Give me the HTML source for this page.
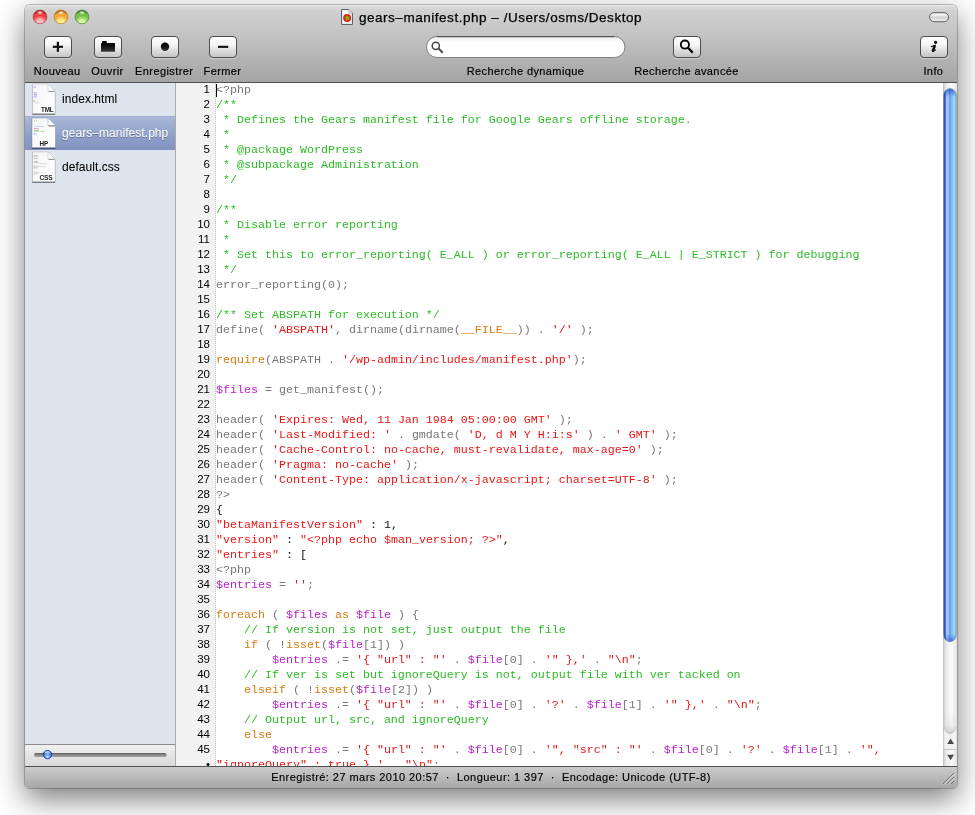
<!DOCTYPE html>
<html><head><meta charset="utf-8">
<style>
*{box-sizing:border-box;margin:0;padding:0}
html,body{width:975px;height:815px;overflow:hidden;background:#fff;font-family:"Liberation Sans",sans-serif}
#root{position:absolute;left:0;top:0;width:975px;height:815px;will-change:transform}
.a{position:absolute}
#win{left:25px;top:5px;width:932px;height:783px;border-radius:5px 5px 4px 4px;box-shadow:0 11px 30px rgba(0,0,0,0.52),0 0 0 1px rgba(0,0,0,0.22)}
#top{left:25px;top:5px;width:932px;height:78px;border-radius:5px 5px 0 0;background:linear-gradient(#ececec 0px,#dcdcdc 1.5px,#d0d0d0 6px,#c3c3c3 30px,#a4a4a4 77px);border-bottom:1px solid #515151}
.tl{top:10px;width:14px;height:14px;border-radius:50%}
.tl::after{content:"";position:absolute;left:4px;top:1px;width:6px;height:4px;border-radius:50%;background:radial-gradient(rgba(255,255,255,0.95),rgba(255,255,255,0) 70%)}
#title{left:0;top:10px;width:975px;padding-left:26px;text-align:center;font-size:13.5px;letter-spacing:0.53px;color:#000;-webkit-text-stroke:0.25px #000;white-space:nowrap}
.btn{top:36px;width:28px;height:22px;border:1px solid #4d4d4d;border-radius:4px;background:linear-gradient(#ffffff 0%,#f4f4f4 40%,#c4c4c4 100%);box-shadow:0 1px 0 rgba(255,255,255,0.35)}
.lbl{top:65px;width:140px;text-align:center;font-size:11px;letter-spacing:0.4px;color:#000;white-space:nowrap;-webkit-text-stroke:0.2px #000}
#side{left:25px;top:83px;width:151px;height:683px;background:#dee4ed;border-right:1px solid #ababab}
.sn{left:62px;font-size:12px;letter-spacing:0.05px;color:#000;white-space:nowrap;line-height:14px;-webkit-text-stroke:0.05px #000}
.sel{color:#fafafa;text-shadow:0 1px 0.5px rgba(0,0,0,0.3);-webkit-text-stroke:0.1px #fafafa}
#gut{left:176px;top:83px;width:40px;height:683px;background:#f2f2f2;border-right:1px dotted #c2c2c2}
#ed{left:216px;top:83px;width:727px;height:683px;background:#fff;overflow:hidden}
#status{left:25px;top:766px;width:932px;height:22px;border-radius:0 0 4px 4px;background:linear-gradient(#cbcbcb,#a7a7a7);border-top:1px solid #515151;font-size:11px;letter-spacing:0.45px;color:#000;text-align:center;line-height:21px;white-space:nowrap;-webkit-text-stroke:0.15px #000}
pre{font-family:"Liberation Mono",monospace;font-size:11.667px;line-height:15px}
#code{left:0;top:0;color:#777}
#nums{right:5px;top:-1px;text-align:right;color:#000;font-family:"Liberation Sans",sans-serif;font-size:11.5px}
.c{color:#2dbb26}.s{color:#e81616}.k{color:#d87a10}.v{color:#b722c9}.b{color:#111}
</style></head><body>
<div id="root">
<div id="win" class="a"></div>
<div id="top" class="a"></div>
<svg class="a" style="left:0;top:0" width="100" height="30" viewBox="0 0 100 30"><defs><radialGradient id="tlr" cx="0.5" cy="0.95" r="0.85"><stop offset="0" stop-color="#f9c2c2"/><stop offset="0.25" stop-color="#f9c2c2"/><stop offset="0.65" stop-color="#ee3e3e"/><stop offset="0.85" stop-color="#ee3e3e"/><stop offset="1" stop-color="#a82222"/></radialGradient><radialGradient id="tlo" cx="0.5" cy="0.95" r="0.85"><stop offset="0" stop-color="#fdf08a"/><stop offset="0.25" stop-color="#fdf08a"/><stop offset="0.65" stop-color="#f2a632"/><stop offset="0.85" stop-color="#f2a632"/><stop offset="1" stop-color="#b06414"/></radialGradient><radialGradient id="tlg" cx="0.5" cy="0.95" r="0.85"><stop offset="0" stop-color="#d8f4a8"/><stop offset="0.25" stop-color="#d8f4a8"/><stop offset="0.65" stop-color="#74bf44"/><stop offset="0.85" stop-color="#74bf44"/><stop offset="1" stop-color="#3c7a22"/></radialGradient><radialGradient id="hl" cx="0.5" cy="0.5" r="0.5"><stop offset="0" stop-color="#fff" stop-opacity="0.95"/><stop offset="1" stop-color="#fff" stop-opacity="0"/></radialGradient></defs><circle cx="40" cy="16.9" r="6.9" fill="url(#tlr)" stroke="#a82222" stroke-opacity="0.75" stroke-width="0.8"/><ellipse cx="40" cy="12.6" rx="3.2" ry="2.2" fill="url(#hl)"/><circle cx="61" cy="16.9" r="6.9" fill="url(#tlo)" stroke="#b06414" stroke-opacity="0.75" stroke-width="0.8"/><ellipse cx="61" cy="12.6" rx="3.2" ry="2.2" fill="url(#hl)"/><circle cx="82" cy="16.9" r="6.9" fill="url(#tlg)" stroke="#3c7a22" stroke-opacity="0.75" stroke-width="0.8"/><ellipse cx="82" cy="12.6" rx="3.2" ry="2.2" fill="url(#hl)"/></svg>
<div id="title" class="a">gears&#8211;manifest.php &#8211; /Users/osms/Desktop</div>
<div class="a btn" style="left:44px"></div>
<div class="a btn" style="left:94px"></div>
<div class="a btn" style="left:151px"></div>
<div class="a btn" style="left:209px"></div>
<div class="a btn" style="left:673px"></div>
<div class="a btn" style="left:920px"></div>
<div class="a lbl" style="left:-12.8px">Nouveau</div>
<div class="a lbl" style="left:37.5px">Ouvrir</div>
<div class="a lbl" style="left:94.2px">Enregistrer</div>
<div class="a lbl" style="left:152.5px">Fermer</div>
<div class="a lbl" style="left:455.5px">Recherche dynamique</div>
<div class="a lbl" style="left:616.5px">Recherche avancée</div>
<div class="a lbl" style="left:863.4px">Info</div>
<svg class="a" style="left:0;top:0" width="975" height="82" viewBox="0 0 975 82">
<defs><linearGradient id="fg" x1="0" y1="0" x2="0" y2="1"><stop offset="0" stop-color="#000"/><stop offset="0.5" stop-color="#111"/><stop offset="1" stop-color="#3a3a3a"/></linearGradient>
<linearGradient id="sf" x1="0" y1="0" x2="0" y2="1"><stop offset="0" stop-color="#e8e8e8"/><stop offset="0.25" stop-color="#fff"/><stop offset="1" stop-color="#fff"/></linearGradient></defs>
<rect x="52.8" y="45.7" width="10.2" height="2.2" fill="#111"/>
<rect x="56.8" y="41.8" width="2.2" height="10" fill="#111"/>
<path d="M102,43 L102,41.8 Q102,41.1 102.8,41.1 L106,41.1 Q106.8,41.1 106.8,42 L106.8,43 L114.3,43 Q115,43 115,43.8 L115,51.8 L101,51.8 L101,43.8 Q101,43 102,43 Z" fill="url(#fg)"/>
<circle cx="165" cy="46.8" r="4.2" fill="url(#fg)"/>
<rect x="218" y="45.8" width="10.2" height="2.1" fill="#111"/>
<rect x="426.5" y="36.5" width="198.5" height="21" rx="10.5" fill="url(#sf)" stroke="#808080" stroke-width="1"/><path d="M437,36.6 H614.5" stroke="#555" stroke-width="1.1"/>
<circle cx="435.8" cy="45.8" r="3.6" fill="none" stroke="#444" stroke-width="1.5"/>
<path d="M438.4,48.4 L442.8,52.8" stroke="#444" stroke-width="2"/>
<circle cx="684.9" cy="44.6" r="4.1" fill="none" stroke="#000" stroke-width="1.8"/>
<path d="M687.8,47.6 L692.8,52.8" stroke="#000" stroke-width="2.2"/>
<circle cx="935.6" cy="42.3" r="1.6" fill="#111"/>
<path d="M934.9,45.4 L932.7,51.4" stroke="#111" stroke-width="2.6"/>
<path d="M930.9,46.8 L935.8,45.1" stroke="#111" stroke-width="1.1"/>
<path d="M932,51.8 Q934,51.6 935.8,49.7" fill="none" stroke="#111" stroke-width="1.1"/>
</svg>

<div id="side" class="a"></div>
<div class="a" style="left:25px;top:116px;width:150px;height:34px;background:linear-gradient(#aab9d8,#8d9fc9 60%,#8194c0);border-top:1px solid #a0b0d2"></div>
<div class="a sn" style="top:92px">index.html</div>
<div class="a sn sel" style="top:126px">gears&#8211;manifest.php</div>
<div class="a sn" style="top:160px">default.css</div>
<svg class="a" style="left:0;top:0" width="176" height="190" viewBox="0 0 176 190">
<defs>
<linearGradient id="pg" x1="0" y1="0" x2="1" y2="1"><stop offset="0" stop-color="#f4f4f4"/><stop offset="1" stop-color="#fff"/></linearGradient>
<filter id="sh" x="-20%" y="-20%" width="140%" height="140%"><feGaussianBlur in="SourceAlpha" stdDeviation="0.6"/><feOffset dy="0.6"/><feComponentTransfer><feFuncA type="linear" slope="0.6"/></feComponentTransfer><feMerge><feMergeNode/><feMergeNode in="SourceGraphic"/></feMerge></filter>
</defs>
<g transform="translate(32.5,84)">
<path d="M0,0 H15.5 L22.5,7 V29.5 H0 Z" fill="url(#pg)" filter="url(#sh)" stroke="#b4b4b4" stroke-width="0.5"/>
<path d="M15.5,0 V7 H22.5 Z" fill="#fff" stroke="#bbb" stroke-width="0.5"/>
<path d="M15.5,7 H22.5 L21.5,8 H16.5 Z" fill="#999"/>
<rect x="1" y="2.6" width="2" height="0.8" fill="#7a7ae8"/><rect x="1" y="8.5" width="3" height="0.8" fill="#8080ee"/><rect x="1.5" y="10.5" width="3" height="0.8" fill="#6a6aee"/><rect x="1" y="12.5" width="3" height="0.8" fill="#8a8aee"/>
<rect x="1" y="16.6" width="1" height="1" fill="#777"/><rect x="2.5" y="18.6" width="4" height="0.6" fill="#bbb"/>
<text x="8.6" y="27.6" font-family="Liberation Sans" font-weight="bold" font-size="6.4" fill="#222" letter-spacing="-0.3">TML</text>
</g>
<g transform="translate(32,118)">
<path d="M0,0 H16 L23.5,7.5 V29.5 H0 Z" fill="url(#pg)" filter="url(#sh)" stroke="#8a96b4" stroke-width="0.5"/>
<path d="M16,0 V7.5 H23.5 Z" fill="#fff" stroke="#8a9ac0" stroke-width="0.5"/>
<path d="M16,7.5 H23.5 L22.5,8.5 H17 Z" fill="#777"/>
<rect x="2" y="2.5" width="1" height="1" fill="#9c9"/><rect x="4" y="2.5" width="1" height="1" fill="#9c9"/>
<rect x="2" y="8" width="10" height="0.8" fill="#c8c8f0"/><rect x="2" y="10.2" width="2" height="1" fill="#e88"/><rect x="4.5" y="10.2" width="2" height="1" fill="#e88"/>
<rect x="2" y="12" width="5" height="1.6" fill="#9d9"/><rect x="8.5" y="13" width="4" height="0.8" fill="#9d9"/><rect x="2" y="15" width="1.5" height="1" fill="#aaf"/><rect x="2" y="16.5" width="3" height="0.6" fill="#bbb"/>
<text x="7.5" y="27.5" font-family="Liberation Sans" font-weight="bold" font-size="6.4" fill="#222" letter-spacing="-0.2">HP</text>
</g>
<g transform="translate(32.5,152)">
<path d="M0,0 H15.5 L22.5,7 V29.5 H0 Z" fill="url(#pg)" filter="url(#sh)" stroke="#b4b4b4" stroke-width="0.5"/>
<path d="M15.5,0 V7 H22.5 Z" fill="#fff" stroke="#bbb" stroke-width="0.5"/>
<path d="M15.5,7 H22.5 L21.5,8 H16.5 Z" fill="#999"/>
<rect x="1.5" y="3.5" width="3" height="3" fill="none" stroke="#aaa" stroke-width="0.6"/><rect x="1.5" y="9.5" width="4" height="1.2" fill="#aaa"/><rect x="6" y="11.5" width="8" height="0.6" fill="#ccc"/>
<rect x="1.5" y="14" width="3" height="2" fill="none" stroke="#aaa" stroke-width="0.6"/><rect x="5" y="14.5" width="9" height="0.6" fill="#ccc"/>
<rect x="1.5" y="20" width="3" height="2" fill="none" stroke="#bbb" stroke-width="0.6"/><rect x="5" y="20.5" width="7" height="0.6" fill="#ccc"/>
<text x="7" y="27.6" font-family="Liberation Sans" font-weight="bold" font-size="6.6" fill="#222" letter-spacing="-0.2">CSS</text>
</g>
</svg>
<div id="gut" class="a"><pre id="nums" class="a">1
2
3
4
5
6
7
8
9
10
11
12
13
14
15
16
17
18
19
20
21
22
23
24
25
26
27
28
29
30
31
32
33
34
35
36
37
38
39
40
41
42
43
44
45
•</pre></div>
<div id="ed" class="a"><pre id="code" class="a">&lt;?php
<span class="c">/**</span>
<span class="c"> * Defines the Gears manifest file for Google Gears offline storage.</span>
<span class="c"> *</span>
<span class="c"> * @package WordPress</span>
<span class="c"> * @subpackage Administration</span>
<span class="c"> */</span>

<span class="c">/**</span>
<span class="c"> * Disable error reporting</span>
<span class="c"> *</span>
<span class="c"> * Set this to error_reporting( E_ALL ) or error_reporting( E_ALL | E_STRICT ) for debugging</span>
<span class="c"> */</span>
error_reporting(0);

<span class="c">/** Set ABSPATH for execution */</span>
define( <span class="s">'ABSPATH'</span>, dirname(dirname(<span class="k">__FILE__</span>)) . <span class="s">'/'</span> );

<span class="k">require</span>(ABSPATH . <span class="s">'/wp-admin/includes/manifest.php'</span>);

<span class="v">$files</span> = get_manifest();

header( <span class="s">'Expires: Wed, 11 Jan 1984 05:00:00 GMT'</span> );
header( <span class="s">'Last-Modified: '</span> . gmdate( <span class="s">'D, d M Y H:i:s'</span> ) . <span class="s">' GMT'</span> );
header( <span class="s">'Cache-Control: no-cache, must-revalidate, max-age=0'</span> );
header( <span class="s">'Pragma: no-cache'</span> );
header( <span class="s">'Content-Type: application/x-javascript; charset=UTF-8'</span> );
?&gt;
<span class="b">{</span>
<span class="s">"betaManifestVersion"</span><span class="b"> : 1,</span>
<span class="s">"version"</span><span class="b"> : </span><span class="s">"&lt;?php echo $man_version; ?&gt;"</span><span class="b">,</span>
<span class="s">"entries"</span><span class="b"> : [</span>
&lt;?php
<span class="v">$entries</span> = <span class="s">''</span>;

<span class="k">foreach</span> ( <span class="v">$files</span><span class="k"> as </span><span class="v">$file</span> ) {
<span class="c">    // If version is not set, just output the file</span>
<span class="k">    if</span> ( !<span class="k">isset</span>(<span class="v">$file</span>[1]) )
<span class="v">        $entries</span> .= <span class="s">'{ "url" : "'</span> . <span class="v">$file</span>[0] . <span class="s">'" },'</span> . <span class="s">"\n"</span>;
<span class="c">    // If ver is set but ignoreQuery is not, output file with ver tacked on</span>
<span class="k">    elseif</span> ( !<span class="k">isset</span>(<span class="v">$file</span>[2]) )
<span class="v">        $entries</span> .= <span class="s">'{ "url" : "'</span> . <span class="v">$file</span>[0] . <span class="s">'?'</span> . <span class="v">$file</span>[1] . <span class="s">'" },'</span> . <span class="s">"\n"</span>;
<span class="c">    // Output url, src, and ignoreQuery</span>
<span class="k">    else</span>
<span class="v">        $entries</span> .= <span class="s">'{ "url" : "'</span> . <span class="v">$file</span>[0] . <span class="s">'", "src" : "'</span> . <span class="v">$file</span>[0] . <span class="s">'?'</span> . <span class="v">$file</span>[1] . <span class="s">'",</span>
<span class="s">"ignoreQuery" : true },'</span> . <span class="s">"\n"</span>;</pre></div>
<div id="status" class="a">Enregistré: 27 mars 2010 20:57 &nbsp;·&nbsp; Longueur: 1 397 &nbsp;·&nbsp; Encodage: Unicode (UTF-8)</div>
<div class="a" style="left:25px;top:744px;width:150px;height:22px;border-top:1px solid #8e8e8e;background:linear-gradient(#f0f0f0,#d9d9d9)"></div>
<div class="a" style="left:216px;top:84px;width:1px;height:13px;background:#000"></div>
<svg class="a" style="left:0;top:0" width="975" height="815" viewBox="0 0 975 815">
<defs>
<linearGradient id="trk" x1="0" y1="0" x2="1" y2="0"><stop offset="0" stop-color="#c8c8c8"/><stop offset="0.25" stop-color="#ececec"/><stop offset="0.6" stop-color="#fafafa"/><stop offset="1" stop-color="#e4e4e4"/></linearGradient>
<linearGradient id="thb" x1="0" y1="0" x2="1" y2="0"><stop offset="0" stop-color="#1a3cc0"/><stop offset="0.14" stop-color="#4a78dc"/><stop offset="0.2" stop-color="#a6c3ee"/><stop offset="0.4" stop-color="#a2c0ef"/><stop offset="0.46" stop-color="#6aa0e8"/><stop offset="0.72" stop-color="#8cc6f8"/><stop offset="0.88" stop-color="#a6defe"/><stop offset="1" stop-color="#7aaee6"/></linearGradient>
<linearGradient id="thc" x1="0" y1="0" x2="0" y2="1"><stop offset="0" stop-color="#1a52cc" stop-opacity="1"/><stop offset="1" stop-color="#1a52cc" stop-opacity="0"/></linearGradient>
<linearGradient id="thd" x1="0" y1="1" x2="0" y2="0"><stop offset="0" stop-color="#1a52cc" stop-opacity="1"/><stop offset="1" stop-color="#1a52cc" stop-opacity="0"/></linearGradient>
<linearGradient id="sld" x1="0" y1="0" x2="0" y2="1"><stop offset="0" stop-color="#5a5a5a"/><stop offset="0.5" stop-color="#8a8a8a"/><stop offset="1" stop-color="#a0a0a0"/></linearGradient>
<radialGradient id="knb" cx="0.5" cy="0.75" r="0.6"><stop offset="0" stop-color="#c8ecff"/><stop offset="0.5" stop-color="#5d9ae8"/><stop offset="1" stop-color="#3a6fd8"/></radialGradient>
<linearGradient id="cap" x1="0" y1="0" x2="0" y2="1"><stop offset="0" stop-color="#d0d0d0" stop-opacity="0"/><stop offset="0.6" stop-color="#d0d0d0" stop-opacity="0.25"/><stop offset="1" stop-color="#c4c4c4" stop-opacity="0.8"/></linearGradient><filter id="bl" x="-20%" y="-50%" width="140%" height="200%"><feGaussianBlur stdDeviation="0.5"/></filter>
<linearGradient id="zm" x1="0" y1="0" x2="0" y2="1"><stop offset="0" stop-color="#e4e4e4"/><stop offset="0.2" stop-color="#f6f6f6"/><stop offset="0.55" stop-color="#cfcfcf"/><stop offset="1" stop-color="#fbfbfb"/></linearGradient>
</defs>
<rect x="943" y="83" width="14" height="683" fill="url(#trk)"/>
<line x1="943.5" y1="83" x2="943.5" y2="766" stroke="#c4c4c4" stroke-width="1"/>
<path d="M943.8,95 A6.2,6.4 0 0 1 956.2,95 L956.2,635.3 A6.2,6.4 0 0 1 943.8,635.3 Z" fill="url(#thb)" stroke="#5a5550" stroke-opacity="0.7" stroke-width="0.7"/>
<path d="M944.2,95 A5.8,6 0 0 1 955.8,95 L955.8,97 L944.2,97 Z" fill="url(#thc)" opacity="0.75"/>
<path d="M944.2,635.3 A5.8,6 0 0 0 955.8,635.3 L955.8,633.5 L944.2,633.5 Z" fill="url(#thd)" opacity="0.6"/>
<path d="M944,727 A6,6.5 0 0 0 956,727 L956,749 L944,749 Z" fill="#f2f2f2"/>
<path d="M944,733.5 L944,749" stroke="#d8d8d8" stroke-width="1"/>
<path d="M944,712 L956,712 L956,727 A6,6.5 0 0 1 944,727 Z" fill="url(#cap)"/>
<path d="M944.3,727 A5.7,6.3 0 0 0 955.7,727" fill="none" stroke="#c0c0c0" stroke-width="1" filter="url(#bl)"/>

<line x1="944" y1="749.5" x2="957" y2="749.5" stroke="#c4c4c4" stroke-width="1"/>
<path d="M947.2,744 L950.6,738.5 L954,744 Z" fill="#4a4a4a"/>
<path d="M947.2,754.7 L954,754.7 L950.6,760.2 Z" fill="#4a4a4a"/>
<rect x="34" y="752.9" width="132.6" height="4" rx="2" fill="url(#sld)"/>
<circle cx="47.5" cy="754.6" r="4.2" fill="url(#knb)" stroke="#2030b8" stroke-width="0.9"/>
<ellipse cx="47.5" cy="752.3" rx="2.6" ry="1.4" fill="#fff" opacity="0.6"/>
<rect x="929.6" y="12.7" width="19" height="9" rx="4.5" fill="url(#zm)" stroke="#505050" stroke-width="0.9"/>
<g stroke="#6e6e6e" stroke-width="1"><line x1="943" y1="784" x2="954" y2="773"/><line x1="947" y1="784" x2="954" y2="777"/><line x1="951" y1="784" x2="954" y2="781"/></g>
<g stroke="#f0f0f0" stroke-width="0.8"><line x1="944" y1="784.5" x2="954.5" y2="774"/><line x1="948" y1="784.5" x2="954.5" y2="778"/></g>
<g transform="translate(341,9)"><path d="M0.6,0.6 H7.8 L11.4,4.2 V15.4 H0.6 Z" fill="#fbfbfb" stroke="#555" stroke-width="1"/><path d="M7.8,0.6 V4.2 H11.4" fill="#eee" stroke="#999" stroke-width="0.6"/><circle cx="6.1" cy="8.9" r="4" fill="#ee1c1c"/><path d="M6.1,5.7 L7,7.6 L9.1,7.5 L7.7,9.1 L8.7,11 L6.5,10.4 L4.7,11.7 L4.9,9.5 L3.2,8.2 L5.3,7.6 Z" fill="#6cc414"/></g>
</svg>
</div>
</body></html>
